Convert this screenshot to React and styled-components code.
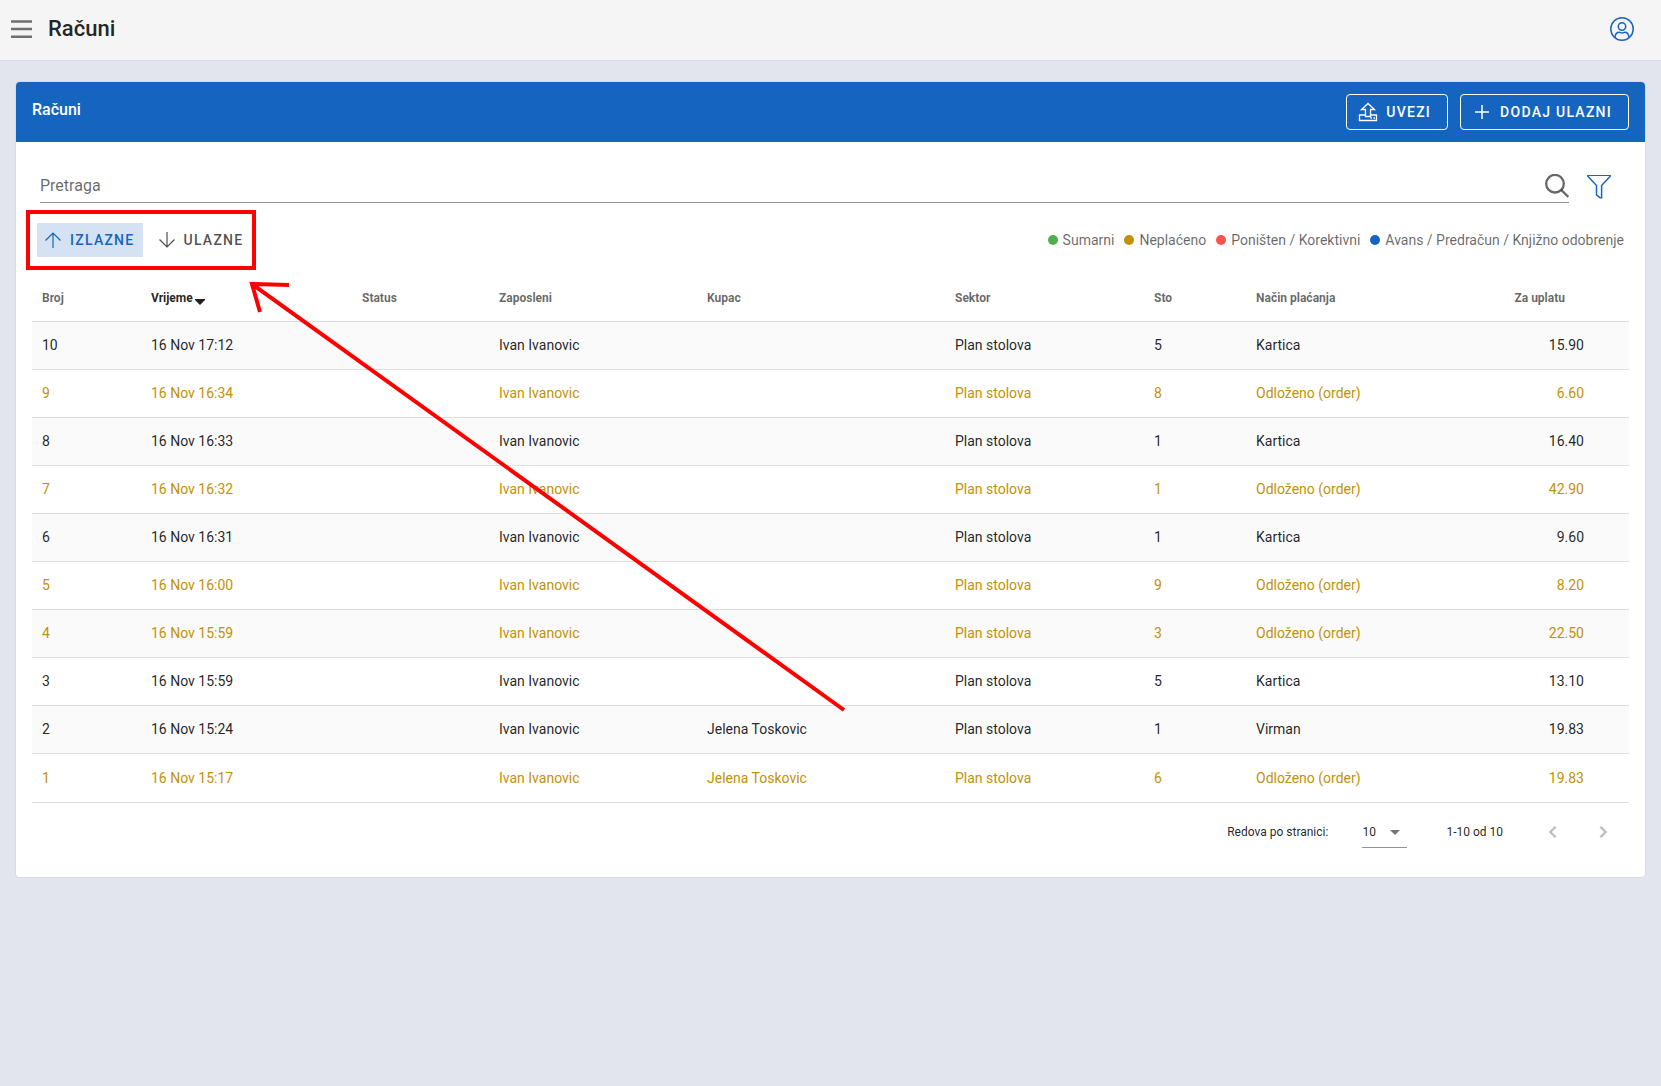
import React from 'react';
import styled, { createGlobalStyle } from 'styled-components';

const Global = createGlobalStyle`
  * { box-sizing: border-box; }
  body {
    margin: 0;
    background: #e2e5ee;
    color: rgba(0, 0, 0, 0.87);
    font-family: Roboto, sans-serif;
    font-size: 14px;
    line-height: 20px;
  }
  button, input, select { font: inherit; color: inherit; }
  h1, h2 { margin: 0; font-weight: 500; }
`;

const TopBar = styled.header`
  display: flex;
  align-items: center;
  justify-content: space-between;
  height: 61px;
  padding: 0 25px 2px 8px;
  background: #f5f5f5;
  border-bottom: 1px solid #d8dae4;
`;

const TopGroup = styled.div`
  display: flex;
  align-items: center;
  gap: 12px;
`;

const PageTitle = styled.h1`
  font-size: 22px;
  line-height: 28px;
`;

const IconButton = styled.button`
  display: flex;
  align-items: center;
  justify-content: center;
  width: ${(p) => p.$size || 28}px;
  height: ${(p) => p.$size || 28}px;
  padding: 0;
  border: 0;
  background: none;
  color: ${(p) => p.$color || 'rgba(0, 0, 0, 0.54)'};
  cursor: pointer;
  &:disabled { color: rgba(0, 0, 0, 0.26); cursor: default; }
`;

const Main = styled.main`
  padding: 21px 16px;
`;

const Card = styled.section`
  position: relative;
  background: #fff;
  border-radius: 4px;
  box-shadow: 0 0 0 1px #d8dae4;
`;

const CardHeader = styled.div`
  display: flex;
  justify-content: space-between;
  height: 60px;
  padding: 12px 16px;
  border-radius: 4px 4px 0 0;
  background: #1565c0;
  color: #fff;
`;

const CardTitle = styled.h2`
  padding-top: 4px;
  font-size: 16px;
  line-height: 24px;
`;

const Actions = styled.div`
  display: flex;
  gap: 12px;
`;

const OutlineButton = styled.button`
  display: flex;
  align-items: center;
  gap: 8px;
  height: 36px;
  padding: 0 16px 0 11px;
  border: 1px solid currentColor;
  border-radius: 4px;
  background: none;
  font-weight: 500;
  letter-spacing: 0.09em;
  text-transform: uppercase;
  cursor: pointer;
`;

const SearchRow = styled.div`
  display: flex;
  align-items: center;
  gap: 16px;
  padding: 28px 32px 0 24px;
`;

const SearchField = styled.label`
  display: flex;
  flex: 1;
  align-items: center;
  height: 33px;
  border-bottom: 1px solid #949494;
  color: rgba(0, 0, 0, 0.6);
`;

const SearchInput = styled.input`
  flex: 1;
  min-width: 0;
  padding: 0;
  border: 0;
  outline: 0;
  background: none;
  font-size: 16px;
  line-height: 24px;
  &::placeholder { color: rgba(0, 0, 0, 0.6); opacity: 1; }
`;

const ToggleRow = styled.div`
  display: flex;
  align-items: center;
  justify-content: space-between;
  padding: 7px 21px 0 10px;
`;

const Toggles = styled.div`
  display: flex;
  gap: 8px;
  padding: 9px 1px 9px 7px;
  border: 4px solid #ff0000;
`;

const Toggle = styled.button`
  display: flex;
  align-items: center;
  gap: 9px;
  height: 34px;
  padding: 0 8px;
  border: 0;
  background: ${(p) => (p.$active ? '#d5e2f4' : 'transparent')};
  color: ${(p) => (p.$active ? '#1565c0' : 'rgba(0, 0, 0, 0.7)')};
  font-weight: 500;
  letter-spacing: 0.09em;
  text-transform: uppercase;
  cursor: pointer;
`;

const Legend = styled.ul`
  display: flex;
  gap: 10px;
  margin: 0;
  padding: 0;
  list-style: none;
  color: rgba(0, 0, 0, 0.6);
`;

const LegendItem = styled.li`
  display: flex;
  align-items: center;
  gap: 5px;
  &::before {
    content: '';
    width: 10px;
    height: 10px;
    border-radius: 50%;
    background: ${(p) => p.$color};
  }
`;

const TableWrap = styled.div`
  padding: 4px 16px 0;
`;

const Table = styled.table`
  width: 100%;
  table-layout: fixed;
  border-collapse: separate;
  border-spacing: 0;
`;

const Col = styled.col`
  width: ${(p) => p.$share}%;
`;

const HeadCell = styled.th`
  height: 48px;
  padding: 0 ${(p) => (p.$end ? 64 : 10)}px 0 10px;
  border-bottom: 1px solid #dedede;
  color: ${(p) => (p.$sorted ? 'rgba(0, 0, 0, 0.87)' : 'rgba(0, 0, 0, 0.6)')};
  font-size: 12px;
  font-weight: 700;
  text-align: ${(p) => (p.$end ? 'right' : 'left')};
  white-space: nowrap;
`;

const SortIcon = styled.svg`
  margin-left: 1px;
  vertical-align: -3px;
`;

const Cell = styled.td`
  height: 48px;
  padding: 0 ${(p) => (p.$end ? 45 : 10)}px 2px 10px;
  border-bottom: 1px solid #dedede;
  text-align: ${(p) => (p.$end ? 'right' : 'left')};
  white-space: nowrap;
`;

const Row = styled.tr`
  color: ${(p) => (p.$unpaid ? '#c29108' : 'inherit')};
  &:nth-child(odd) { background: #fafafa; }
  &:last-child ${Cell} { height: 49px; padding-bottom: 0; }
`;

const Footer = styled.div`
  display: flex;
  align-items: center;
  justify-content: flex-end;
  height: 74px;
  padding: 0 24px 16px 16px;
  font-size: 12px;
`;

const PageSize = styled.label`
  display: flex;
  align-items: center;
  gap: 34px;
`;

const SelectBox = styled.span`
  display: grid;
  align-items: center;
  width: 45px;
  height: 32px;
  border-bottom: 1px solid #949494;
  svg { grid-area: 1 / 1; justify-self: end; pointer-events: none; color: rgba(0, 0, 0, 0.54); }
`;

const Select = styled.select`
  grid-area: 1 / 1;
  width: 100%;
  padding: 0;
  border: 0;
  outline: 0;
  background: none;
  appearance: none;
`;

const Range = styled.span`
  margin: 0 32px 0 39px;
`;

const Pager = styled.div`
  display: flex;
  gap: 14px;
`;

const Arrow = styled.svg`
  position: absolute;
  left: 231px;
  top: 196px;
  pointer-events: none;
`;

const Line = ({ size = 24, view = '0 0 24 24', w = 1.5, children }) => (
  <svg width={size} height={size} viewBox={view} fill="none" stroke="currentColor" strokeWidth={w} aria-hidden="true">
    {children}
  </svg>
);

const columns = [
  ['Broj', 109],
  ['Vrijeme', 211],
  ['Status', 137],
  ['Zaposleni', 208],
  ['Kupac', 248],
  ['Sektor', 199],
  ['Sto', 102],
  ['Način plaćanja', 192],
  ['Za uplatu', 191],
];
const total = columns.reduce((sum, [, w]) => sum + w, 0);

const rows = [
  ['10', '17:12', '', '5', 'Kartica', '15.90'],
  ['9', '16:34', '', '8', 'Odloženo (order)', '6.60'],
  ['8', '16:33', '', '1', 'Kartica', '16.40'],
  ['7', '16:32', '', '1', 'Odloženo (order)', '42.90'],
  ['6', '16:31', '', '1', 'Kartica', '9.60'],
  ['5', '16:00', '', '9', 'Odloženo (order)', '8.20'],
  ['4', '15:59', '', '3', 'Odloženo (order)', '22.50'],
  ['3', '15:59', '', '5', 'Kartica', '13.10'],
  ['2', '15:24', 'Jelena Toskovic', '1', 'Virman', '19.83'],
  ['1', '15:17', 'Jelena Toskovic', '6', 'Odloženo (order)', '19.83'],
];

export default function App() {
  return (
    <>
      <Global />
      <TopBar>
        <TopGroup>
          <IconButton aria-label="Meni">
            <Line w={2.4}><path d="M1 4.500H22M1 12H22M1 19.700H22" /></Line>
          </IconButton>
          <PageTitle>Računi</PageTitle>
        </TopGroup>
        <IconButton aria-label="Profil" $color="#1565c0">
          <Line>
            <circle cx="12" cy="12" r="11.2" />
            <circle cx="12" cy="9.5" r="3.7" />
            <path d="M5 20.5c.3-3.700 1.800-5.200 4.200-5.200 1 0 1.600.7 2.800.7s1.800-.7 2.800-.7c2.400 0 3.900 1.500 4.200 5.200" />
          </Line>
        </IconButton>
      </TopBar>
      <Main>
        <Card>
          <CardHeader>
            <CardTitle>Računi</CardTitle>
            <Actions>
              <OutlineButton>
                <Line size={20} view="0 0 20 20" w={1.3}>
                  <path d="M7.500 14.500V7.500H3.500L10 1.500l6.500 6H12.500v7z" />
                  <path d="M7.500 13H1.500v5.500h17V13H12.500M12.500 16h1.500M15.500 16H17" />
                </Line>
                Uvezi
              </OutlineButton>
              <OutlineButton>
                <Line size={20} view="0 0 20 20"><path d="M10 3v14M3 10h14" /></Line>
                Dodaj ulazni
              </OutlineButton>
            </Actions>
          </CardHeader>
          <SearchRow>
            <SearchField>
              <SearchInput type="text" placeholder="Pretraga" aria-label="Pretraga" />
              <Line w={2.3}><circle cx="10" cy="9.700" r="8.800" /><path d="M16.300 16L23.300 23" /></Line>
            </SearchField>
            <IconButton aria-label="Filter" $color="#1565c0">
              <Line><path d="M.8.3h22.400v1L14.600 10.500v12.200h-1.600L9.500 20V10.500L.8 1.300z" /></Line>
            </IconButton>
          </SearchRow>
          <ToggleRow>
            <Toggles>
              <Toggle $active aria-pressed="true">
                <Line size={16} view="0 0 16 16" w={1.2}><path d="M8 16V1M.5 8.500L8 1l7.500 7.500" /></Line>
                Izlazne
              </Toggle>
              <Toggle aria-pressed="false">
                <Line size={16} view="0 0 16 16" w={1.2}><path d="M8 0v15M.5 7.500L8 15l7.500-7.500" /></Line>
                Ulazne
              </Toggle>
            </Toggles>
            <Legend>
              <LegendItem $color="#4caf50">Sumarni</LegendItem>
              <LegendItem $color="#c29108">Neplaćeno</LegendItem>
              <LegendItem $color="#ff5252">Poništen / Korektivni</LegendItem>
              <LegendItem $color="#1565c0">Avans / Predračun / Knjižno odobrenje</LegendItem>
            </Legend>
          </ToggleRow>
          <TableWrap>
            <Table>
              <colgroup>
                {columns.map(([name, w]) => <Col key={name} $share={(w / total) * 100} />)}
              </colgroup>
              <thead>
                <tr>
                  {columns.map(([name]) => (
                    <HeadCell key={name} scope="col" $end={name === 'Za uplatu'} $sorted={name === 'Vrijeme'}>
                      {name}
                      {name === 'Vrijeme' && (
                        <SortIcon width="12" height="6" viewBox="0 0 12 6" aria-hidden="true">
                          <path d="M1 0h10v1L6 6L1 1z" fill="currentColor" />
                        </SortIcon>
                      )}
                    </HeadCell>
                  ))}
                </tr>
              </thead>
              <tbody>
                {rows.map(([no, time, buyer, table, method, amount]) => (
                  <Row key={no} $unpaid={method.startsWith('Odloženo')}>
                    <Cell>{no}</Cell>
                    <Cell>16 Nov {time}</Cell>
                    <Cell />
                    <Cell>Ivan Ivanovic</Cell>
                    <Cell>{buyer}</Cell>
                    <Cell>Plan stolova</Cell>
                    <Cell>{table}</Cell>
                    <Cell>{method}</Cell>
                    <Cell $end>{amount}</Cell>
                  </Row>
                ))}
              </tbody>
            </Table>
          </TableWrap>
          <Footer>
            <PageSize>
              Redova po stranici:
              <SelectBox>
                <Select defaultValue="10"><option>10</option><option>25</option></Select>
                <svg width="24" height="24" viewBox="0 0 24 24" aria-hidden="true"><path d="M7 10l5 5 5-5z" fill="currentColor" /></svg>
              </SelectBox>
            </PageSize>
            <Range>1-10 od 10</Range>
            <Pager>
              <IconButton $size={36} disabled aria-label="Prethodna">
                <Line w={2.3}><path d="M14.700 6.700L9.400 12l5.300 5.300" /></Line>
              </IconButton>
              <IconButton $size={36} disabled aria-label="Sljedeća">
                <Line w={2.3}><path d="M9.300 6.700L14.600 12l-5.300 5.300" /></Line>
              </IconButton>
            </Pager>
          </Footer>
          <Arrow width="602" height="436" viewBox="0 0 602 436" fill="none" stroke="#ff0000" strokeWidth="4" aria-hidden="true">
            <path d="M42 7L5 6L13 34M5 6L597 432" />
          </Arrow>
        </Card>
      </Main>
    </>
  );
}
